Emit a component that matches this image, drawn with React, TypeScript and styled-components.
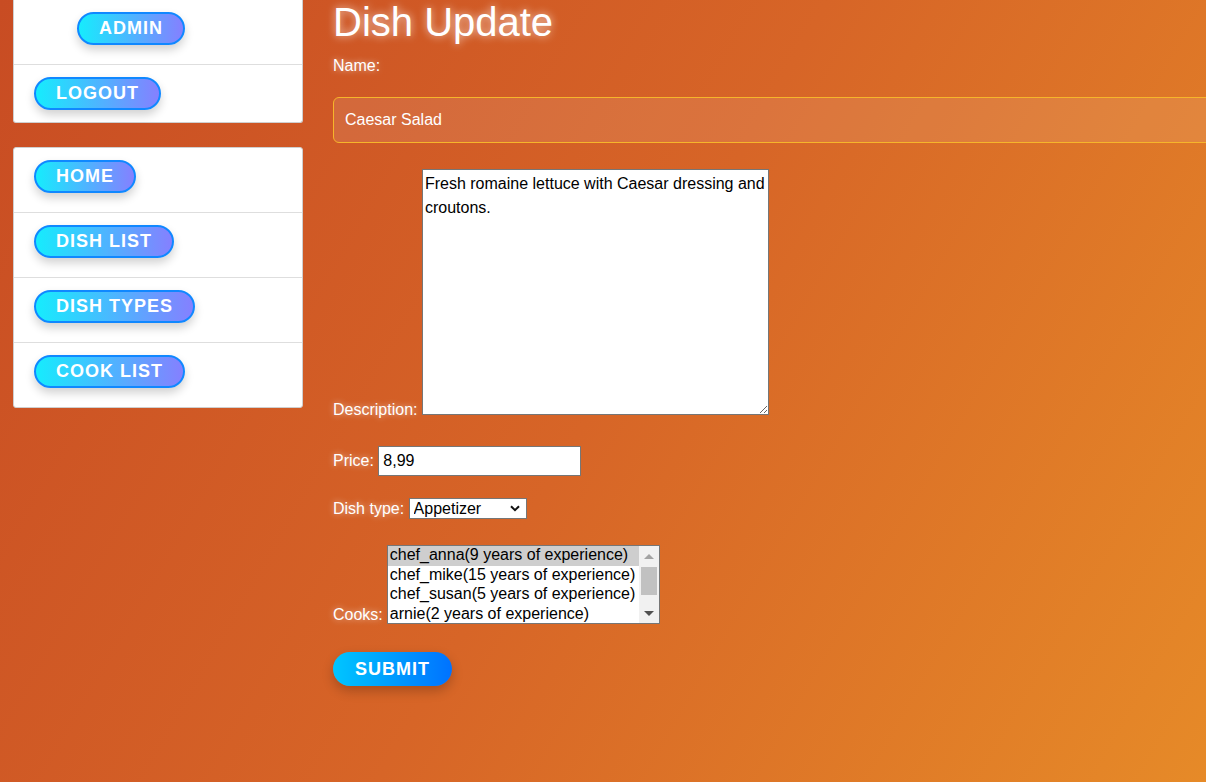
import React from "react";
import styled, { createGlobalStyle } from "styled-components";

const Global = createGlobalStyle`
  html, body {
    margin: 0;
    padding: 0;
    overflow: hidden;
  }
  body {
    min-height: 100vh;
    font-family: "Liberation Sans", Arial, sans-serif;
    background: linear-gradient(120deg, #c84c23 0%, #d76527 50%, #e68a28 100%);
    background-attachment: fixed;
  }
`;

const Page = styled.div`
  display: flex;
  align-items: flex-start;
  gap: 30px;
  padding-left: 13px;
  min-height: 782px;
  box-sizing: border-box;
`;

const Sidebar = styled.aside`
  width: 290px;
  flex: none;
  display: flex;
  flex-direction: column;
  gap: 24px;
`;

const Card = styled.ul<{ $noTop?: boolean }>`
  list-style: none;
  margin: 0;
  padding: 0;
  background: #fff;
  border: 1px solid #cfcfcf;
  border-top: ${(p) => (p.$noTop ? "none" : "1px solid #cfcfcf")};
  border-radius: ${(p) => (p.$noTop ? "0 0 3px 3px" : "3px")};
`;

const Row = styled.li<{ $indent?: number; $bottom?: number }>`
  display: flex;
  padding: 12px 20px ${(p) => p.$bottom ?? 19}px ${(p) => p.$indent ?? 20}px;
  border-bottom: 1px solid #dedede;
  &:last-child {
    border-bottom: none;
  }
`;

const NavButton = styled.a`
  display: inline-flex;
  align-items: center;
  height: 33px;
  box-sizing: border-box;
  padding: 0 20px;
  border: 2px solid #1088ff;
  border-radius: 17px;
  background: linear-gradient(90deg, #16ecfd 0%, #52b0ff 55%, #8580ff 100%);
  color: #fff;
  font-family: "Liberation Sans", Arial, sans-serif;
  font-weight: 700;
  font-size: 18px;
  letter-spacing: 1px;
  text-transform: uppercase;
  text-decoration: none;
  box-shadow: 0 5px 10px rgba(0, 0, 0, 0.18);
  cursor: pointer;
`;

const Main = styled.main`
  flex: 1;
  min-width: 0;
  color: #fff;
  font-size: 16px;
`;

const Title = styled.h1`
  margin: 0;
  font-size: 40px;
  font-weight: 400;
  line-height: normal;
  color: #fff;
  text-shadow: 0 0 8px rgba(255, 255, 255, 0.75);
`;

const Label = styled.label`
  color: #fff;
  font-size: 16px;
  line-height: normal;
  text-shadow: 0 0 6px rgba(255, 255, 255, 0.6);
`;

const Field = styled.div<{ $top: number }>`
  margin-top: ${(p) => p.$top}px;
`;

const BottomRow = styled.div<{ $top: number }>`
  display: flex;
  align-items: flex-end;
  gap: 4px;
  margin-top: ${(p) => p.$top}px;
`;

const NameInput = styled.input`
  display: block;
  margin-top: 22px;
  width: calc(100% + 20px);
  height: 46px;
  box-sizing: border-box;
  padding: 0 11px;
  border: 1px solid #f6b52b;
  border-radius: 6px;
  background: rgba(255, 255, 255, 0.1);
  color: #fff;
  font-family: "Liberation Sans", Arial, sans-serif;
  font-size: 16px;
  outline: none;
`;

const TextArea = styled.textarea`
  width: 347px;
  height: 246px;
  box-sizing: border-box;
  margin: 0;
  padding: 2px;
  border: 1px solid #767676;
  font-family: "Liberation Sans", Arial, sans-serif;
  font-size: 16px;
  line-height: 24px;
  color: #000;
  background: #fff;
  resize: both;
`;

const PriceInput = styled.input`
  width: 203px;
  height: 30px;
  box-sizing: border-box;
  margin: 0;
  padding: 0 4px;
  border: 1px solid #767676;
  font-family: "Liberation Sans", Arial, sans-serif;
  font-size: 16px;
  color: #000;
  background: #fff;
`;

const SelectWrap = styled.span`
  position: relative;
  display: inline-block;
`;

const Select = styled.select`
  appearance: none;
  -webkit-appearance: none;
  width: 118px;
  height: 21px;
  box-sizing: border-box;
  margin: 0;
  padding: 0 20px 0 4px;
  border: 1px solid #767676;
  border-radius: 0;
  font-family: "Liberation Sans", Arial, sans-serif;
  font-size: 16px;
  line-height: 19px;
  color: #000;
  background: #fff;
  vertical-align: baseline;
`;

const Chevron = styled.svg`
  position: absolute;
  right: 7px;
  top: 7px;
  pointer-events: none;
`;

const ListBox = styled.div`
  display: flex;
  width: 273px;
  height: 79px;
  box-sizing: border-box;
  border: 1px solid #767676;
  background: #fff;
  flex: none;
`;

const OptionList = styled.ul`
  flex: 1;
  min-width: 0;
  margin: 0;
  padding: 0;
  list-style: none;
  overflow: hidden;
  font-family: "Liberation Sans", Arial, sans-serif;
  font-size: 16px;
  color: #000;
`;

const Option = styled.li<{ $selected?: boolean }>`
  height: 19.5px;
  box-sizing: border-box;
  padding: 0 2px 1px;
  line-height: 18.5px;
  white-space: nowrap;
  background: ${(p) => (p.$selected ? "#cecece" : "transparent")};
  cursor: default;
`;

const ScrollBar = styled.div`
  width: 20px;
  flex: none;
  display: flex;
  flex-direction: column;
  background: #f1f1f1;
`;

const ScrollArrow = styled.div<{ $down?: boolean; $active?: boolean }>`
  height: 20px;
  flex: none;
  display: flex;
  align-items: center;
  justify-content: center;
  &::before {
    content: "";
    width: 0;
    height: 0;
    border-left: 5px solid transparent;
    border-right: 5px solid transparent;
    ${(p) =>
      p.$down
        ? `border-top: 5px solid ${p.$active ? "#505050" : "#a3a3a3"};`
        : `border-bottom: 5px solid ${p.$active ? "#505050" : "#a3a3a3"};`}
  }
`;

const Thumb = styled.div`
  height: 28px;
  margin: 1px 2px 0;
  background: #c1c1c1;
  flex: none;
`;

const TrackRest = styled.div`
  flex: 1;
`;

const SubmitButton = styled.button`
  display: inline-flex;
  align-items: center;
  height: 34px;
  padding: 0 22px;
  border: none;
  border-radius: 17px;
  background: linear-gradient(90deg, #00c6ff 0%, #0072ff 100%);
  color: #fff;
  font-family: "Liberation Sans", Arial, sans-serif;
  font-weight: 700;
  font-size: 18px;
  letter-spacing: 1px;
  box-shadow: 0 5px 12px rgba(0, 0, 0, 0.22);
  cursor: pointer;
`;

const cooks = [
  { id: "anna", label: "chef_anna(9 years of experience)" },
  { id: "mike", label: "chef_mike(15 years of experience)" },
  { id: "susan", label: "chef_susan(5 years of experience)" },
  { id: "arnie", label: "arnie(2 years of experience)" },
];

export default function App() {
  const [selected, setSelected] = React.useState<string[]>(["anna"]);
  const toggle = (id: string) =>
    setSelected((s) => (s.includes(id) ? s.filter((x) => x !== id) : [...s, id]));

  return (
    <>
      <Global />
      <Page>
        <Sidebar>
          <Card $noTop>
            <Row $indent={63}>
              <NavButton>Admin</NavButton>
            </Row>
            <Row $bottom={12}>
              <NavButton>Logout</NavButton>
            </Row>
          </Card>
          <Card>
            <Row>
              <NavButton>Home</NavButton>
            </Row>
            <Row>
              <NavButton>Dish list</NavButton>
            </Row>
            <Row>
              <NavButton>Dish types</NavButton>
            </Row>
            <Row>
              <NavButton>Cook list</NavButton>
            </Row>
          </Card>
        </Sidebar>
        <Main>
          <Title>Dish Update</Title>
          <Field $top={12}>
            <Label htmlFor="name">Name:</Label>
            <NameInput id="name" defaultValue="Caesar Salad" />
          </Field>
          <Field $top={26}>
            <Label htmlFor="desc">Description:</Label>{" "}
            <TextArea
              id="desc"
              defaultValue="Fresh romaine lettuce with Caesar dressing and croutons."
            />
          </Field>
          <Field $top={27}>
            <Label htmlFor="price">Price:</Label>{" "}
            <PriceInput id="price" defaultValue="8,99" />
          </Field>
          <Field $top={22}>
            <Label htmlFor="type">Dish type:</Label>{" "}
            <SelectWrap>
              <Select id="type" defaultValue="appetizer">
                <option value="appetizer">Appetizer</option>
                <option value="main">Main</option>
                <option value="dessert">Dessert</option>
              </Select>
              <Chevron width="10" height="7" viewBox="0 0 10 7">
                <polyline
                  points="1,1.2 5,5.2 9,1.2"
                  fill="none"
                  stroke="#111"
                  strokeWidth="2"
                />
              </Chevron>
            </SelectWrap>
          </Field>
          <BottomRow $top={26}>
            <Label>Cooks:</Label>
            <ListBox role="listbox" aria-multiselectable="true">
              <OptionList>
                {cooks.map((c) => (
                  <Option
                    key={c.id}
                    role="option"
                    aria-selected={selected.includes(c.id)}
                    $selected={selected.includes(c.id)}
                    onClick={() => toggle(c.id)}
                  >
                    {c.label}
                  </Option>
                ))}
              </OptionList>
              <ScrollBar>
                <ScrollArrow />
                <Thumb />
                <TrackRest />
                <ScrollArrow $down $active />
              </ScrollBar>
            </ListBox>
          </BottomRow>
          <Field $top={28}>
            <SubmitButton type="submit">SUBMIT</SubmitButton>
          </Field>
        </Main>
      </Page>
    </>
  );
}
